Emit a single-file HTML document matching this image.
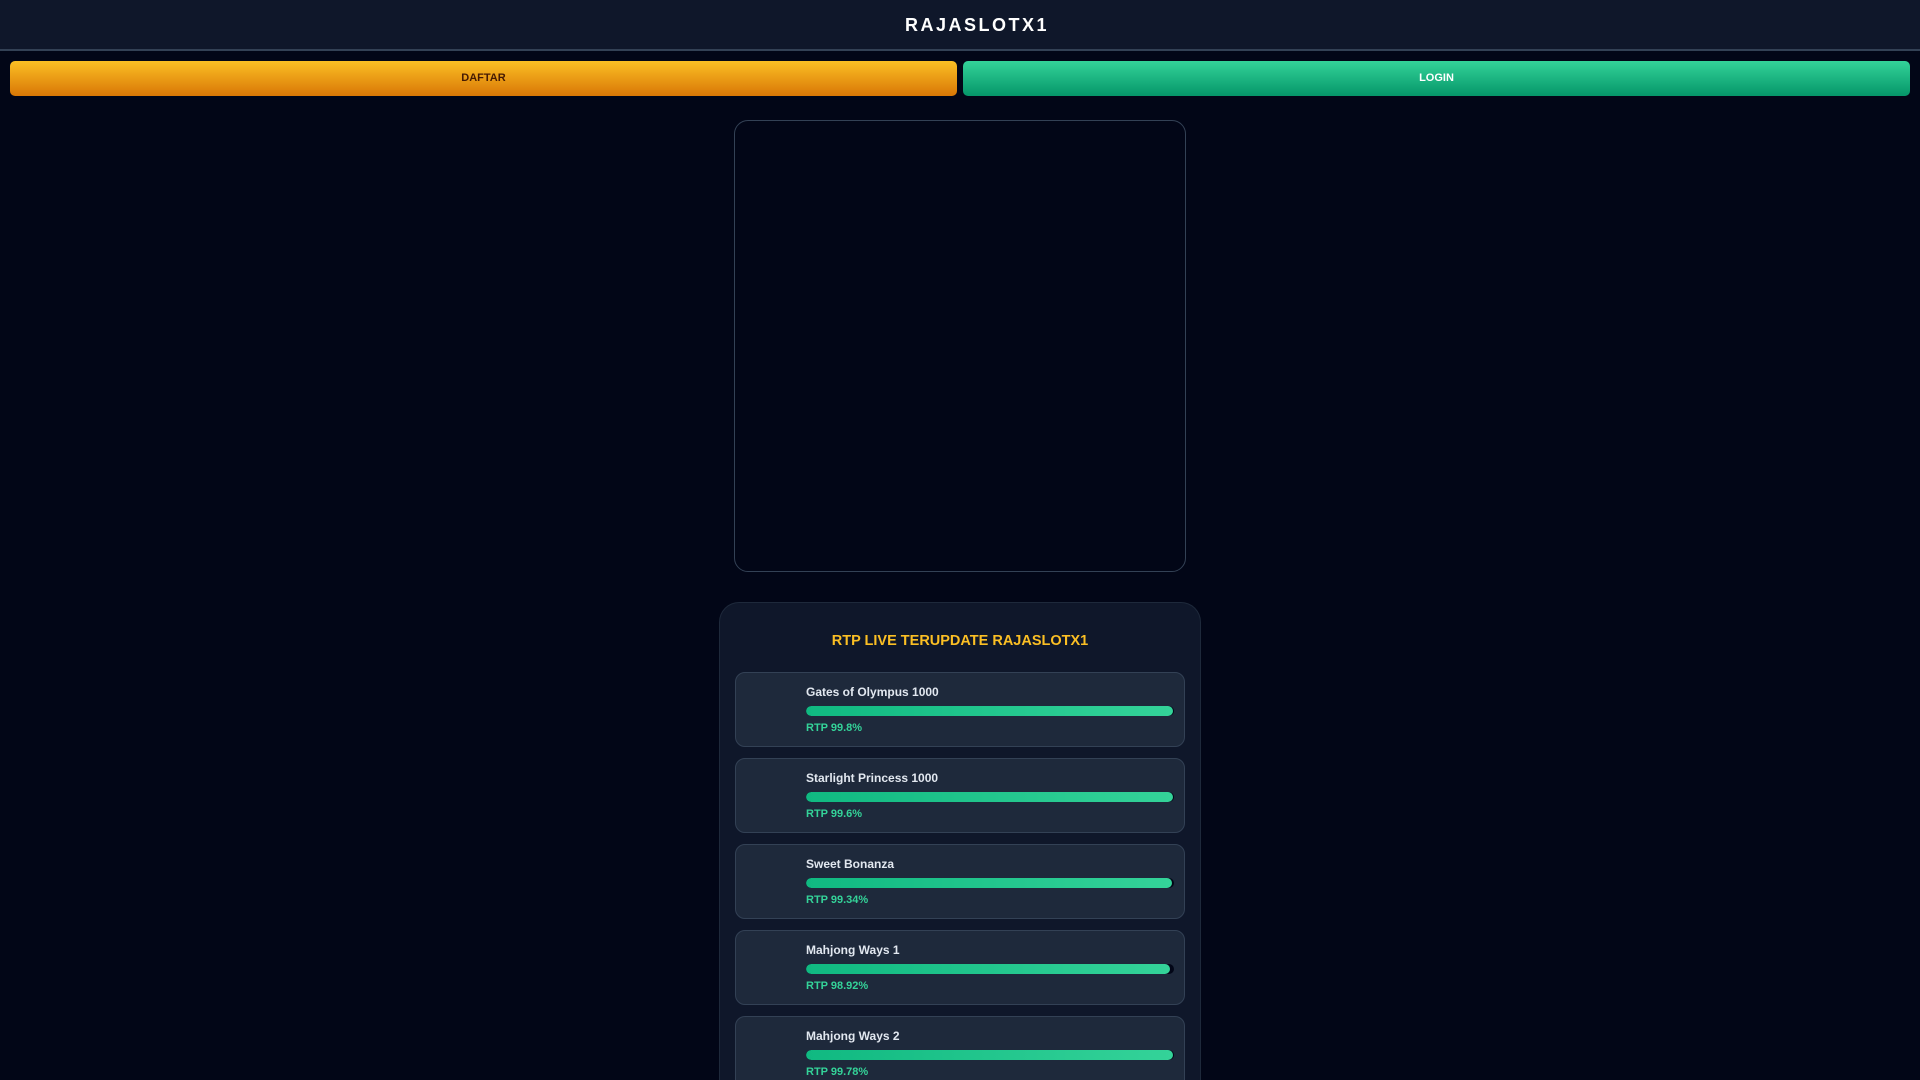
<!DOCTYPE html>
<html><head><meta charset="utf-8"><style>
*{box-sizing:border-box;margin:0;padding:0}
html,body{width:1920px;height:1080px;overflow:hidden}
body{background:#020617;font-family:"Liberation Sans",Arial,sans-serif;position:relative}
.hdr{position:absolute;left:0;top:0;width:1920px;height:51px;background:#0f172a;border-bottom:2px solid #334155;text-align:center;color:#fff;font-weight:bold;font-size:18px;letter-spacing:2.5px;line-height:50px;padding-left:34px}
.btn{position:absolute;top:61px;height:35px;border-radius:5px;font-size:11px;font-weight:bold;text-align:center;line-height:35px}
.d{left:10px;width:947px;background:linear-gradient(#fbbf24,#d97706);color:#451a03}
.l{left:963px;width:947px;background:linear-gradient(#34d399,#059669);color:#fff}
.ban{position:absolute;left:734px;top:120px;width:452px;height:452px;border:1px solid #334155;border-radius:14px;background:#020617}
.panel{position:absolute;left:719px;top:602px;width:482px;height:478px;background:#0f172a;border:1px solid #1e293b;border-bottom:none;border-radius:20px 20px 0 0}
.ttl{position:absolute;left:0;width:100%;top:30px;text-align:center;color:#fbbf24;font-weight:bold;font-size:14.5px}
.card{position:absolute;left:15px;width:450px;height:75px;background:#1e293b;border:1px solid #334155;border-radius:10px}
.nm{position:absolute;left:70px;top:12px;color:#e2e8f0;font-weight:bold;font-size:12px}
.bar{position:absolute;left:70px;top:33px;width:368px;height:10px;border-radius:5px;background:#020617;overflow:hidden}
.bar i{display:block;height:100%;border-radius:5px;background:linear-gradient(90deg,#10b981,#34d399)}
.rt{position:absolute;left:70px;top:49px;color:#34d399;font-weight:bold;font-size:11px}
</style></head><body>
<div class="hdr">RAJASLOTX1</div>
<div class="btn d">DAFTAR</div>
<div class="btn l">LOGIN</div>
<div class="ban"></div>
<div class="panel">
<div class="ttl">RTP LIVE TERUPDATE RAJASLOTX1</div>
<div class="card" style="top:69px"><div class="nm">Gates of Olympus 1000</div><div class="bar"><i style="width:99.8%"></i></div><div class="rt">RTP 99.8%</div></div>
<div class="card" style="top:155px"><div class="nm">Starlight Princess 1000</div><div class="bar"><i style="width:99.6%"></i></div><div class="rt">RTP 99.6%</div></div>
<div class="card" style="top:241px"><div class="nm">Sweet Bonanza</div><div class="bar"><i style="width:99.34%"></i></div><div class="rt">RTP 99.34%</div></div>
<div class="card" style="top:327px"><div class="nm">Mahjong Ways 1</div><div class="bar"><i style="width:98.92%"></i></div><div class="rt">RTP 98.92%</div></div>
<div class="card" style="top:413px"><div class="nm">Mahjong Ways 2</div><div class="bar"><i style="width:99.78%"></i></div><div class="rt">RTP 99.78%</div></div>
</div>
</body></html>
